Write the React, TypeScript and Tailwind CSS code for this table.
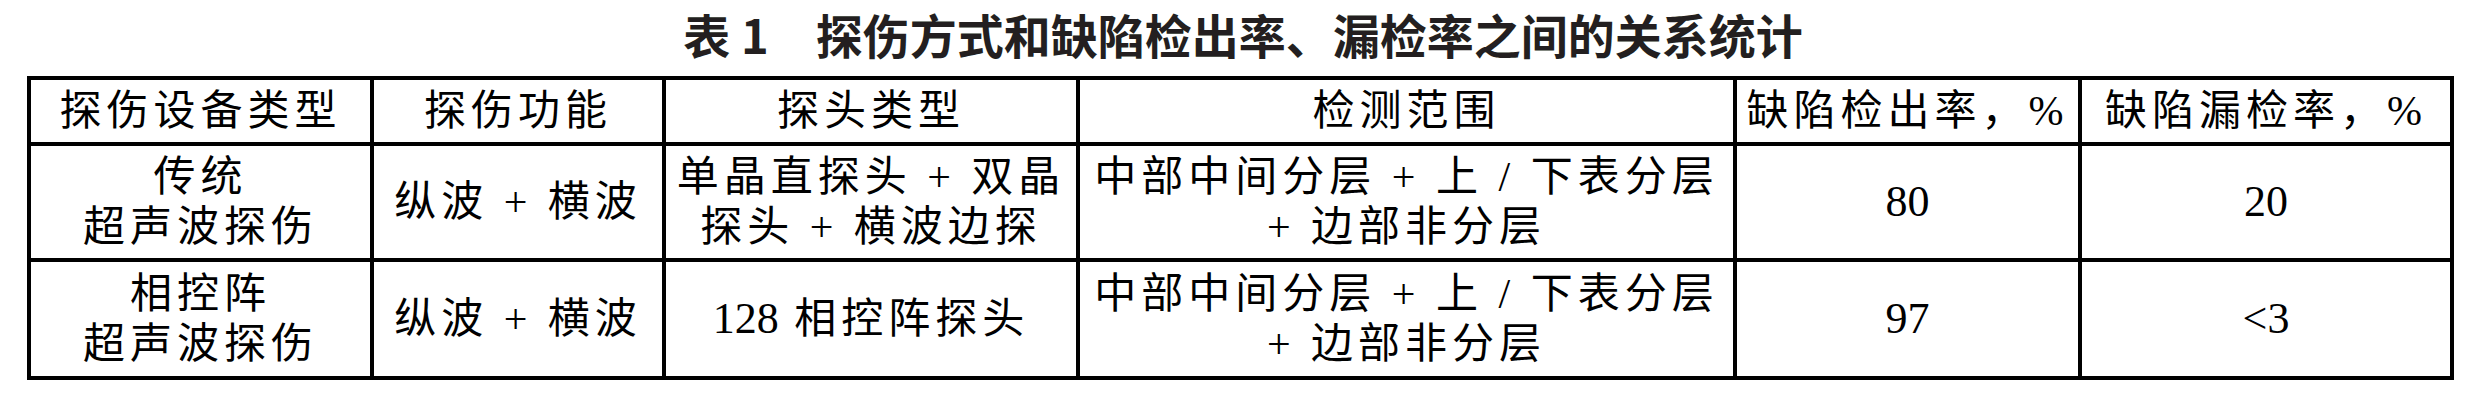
const cell =
  "flex items-center justify-center bg-white text-center text-[42px] leading-[50px] tracking-[5px] text-black font-['Liberation_Serif','Noto_Sans_CJK_SC',serif]";

const header = ['探伤设备类型', '探伤功能', '探头类型', '检测范围', '缺陷检出率，%', '缺陷漏检率，%'];

const rows: string[][][] = [
  [
    ['传统', '超声波探伤'],
    ['纵波 + 横波'],
    ['单晶直探头 + 双晶', '探头 + 横波边探'],
    ['中部中间分层 + 上 / 下表分层', '+ 边部非分层'],
    ['80'],
    ['20'],
  ],
  [
    ['相控阵', '超声波探伤'],
    ['纵波 + 横波'],
    ['128 相控阵探头'],
    ['中部中间分层 + 上 / 下表分层', '+ 边部非分层'],
    ['97'],
    ['<3'],
  ],
];

// digits are set in the serif face without the wide CJK tracking
function Line({ text }: { text: string }) {
  const parts = text.split(/([0-9<]+)/);
  return (
    <div>
      {parts.map((p, i) =>
        /^[0-9<]+$/.test(p) ? (
          <span key={i} className="text-[44px] tracking-normal">
            {p}
          </span>
        ) : (
          p
        ),
      )}
    </div>
  );
}

export default function App() {
  return (
    <div className="h-[408px] w-[2486px] bg-white">
      <h1 className="h-[68px] text-center text-[47px] font-bold leading-[68px] text-[#231f20] font-['Noto_Sans_CJK_SC',sans-serif]">
        表 1　探伤方式和缺陷检出率、漏检率之间的关系统计
      </h1>

      <div className="ml-[27px] mt-[8px] grid w-[2427px] grid-cols-[339px_288px_410px_653px_341px_368px] grid-rows-[62px_112px_114px] gap-[4px] bg-black p-[4px]">
        {header.map((h) => (
          <div key={h} className={cell}>
            {h}
          </div>
        ))}
        {rows.map((row, r) =>
          row.map((lines, c) => (
            <div key={`${r}-${c}`} className={cell}>
              <div>
                {lines.map((l) => (
                  <Line key={l} text={l} />
                ))}
              </div>
            </div>
          )),
        )}
      </div>
    </div>
  );
}
